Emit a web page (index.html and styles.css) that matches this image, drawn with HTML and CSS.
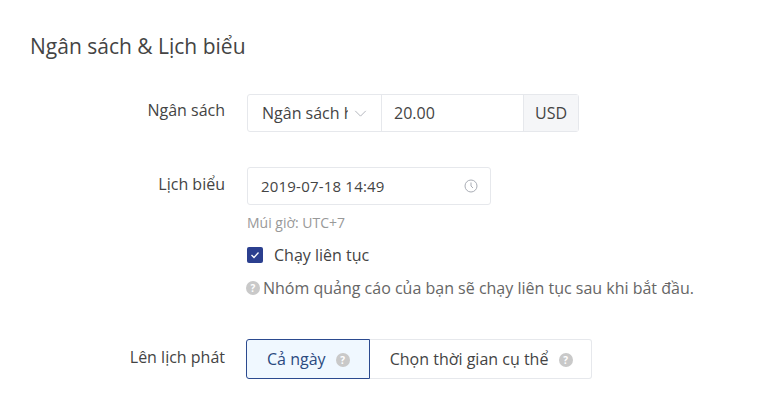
FILE: index.html
```html
<!DOCTYPE html>
<html>
<head>
  <title>Ngân sách & Lịch biểu</title>
  <link rel="stylesheet" href="styles.css">
</head>
<body>
  <h3>Ngân sách &amp; Lịch biểu</h3>

  <div class="row row-budget">
    <div class="label">Ngân sách</div>
    <div class="control">
      <div class="budget-group">
        <div class="budget-select">
          <span class="select-text">Ngân sách hàng ngày</span>
          <svg class="chevron" viewBox="0 0 14 8"><path d="M1 1l6 6 6-6"/></svg>
        </div>
        <div class="budget-input">20.00</div>
        <div class="budget-unit">USD</div>
      </div>
    </div>
  </div>

  <div class="row row-schedule">
    <div class="label">Lịch biểu</div>
    <div class="control">
      <div class="date-input">
        <span>2019-07-18 14:49</span>
        <svg class="clock" viewBox="0 0 14 14"><circle cx="7" cy="7" r="6"/><path d="M7 3.5V7l2 2"/></svg>
      </div>
      <div class="timezone">Múi giờ: UTC+7</div>
      <div class="check-row">
        <span class="checkbox"><svg viewBox="0 0 16 16"><path d="M4.5 8l2.5 2.5 4.5-5"/></svg></span>
        <span>Chạy liên tục</span>
      </div>
      <div class="tip"><span class="help help-small">?</span>Nhóm quảng cáo của bạn sẽ chạy liên tục sau khi bắt đầu.</div>
    </div>
  </div>

  <div class="row row-delivery">
    <div class="label">Lên lịch phát</div>
    <div class="control">
      <div class="segments">
        <div class="segment active">Cả ngày <span class="help">?</span></div>
        <div class="segment">Chọn thời gian cụ thể <span class="help">?</span></div>
      </div>
    </div>
  </div>
</body>
</html>
```

FILE: styles.css
```css
body {
  margin: 0;
  padding: 32px 0 0 30px;
  background: #fff;
  color: #333;
  font-family: "Open Sans", "Noto Sans", sans-serif;
  font-size: 16px;
}

h3 {
  margin: 0 0 34px 0;
  font-size: 21px;
  line-height: 28px;
  font-weight: 400;
  color: #444;
}

.row {
  display: flex;
}

.row-schedule {
  margin-top: 35px;
}

.row-delivery {
  margin-top: 41px;
}

.label {
  width: 195px;
  margin-right: 22px;
  text-align: right;
  line-height: 33px;
  color: #444;
}

.row-schedule .label {
  line-height: 35px;
}

.row-delivery .label {
  line-height: 36px;
}

.budget-group {
  display: flex;
  width: 332px;
  height: 38px;
  box-sizing: border-box;
  border: 1px solid #e6e8ec;
  border-radius: 3px;
  line-height: 36px;
  color: #444;
}

.budget-select {
  display: flex;
  align-items: center;
  width: 134px;
  box-sizing: border-box;
  padding: 0 12px 0 14px;
  border-right: 1px solid #e6e8ec;
}

.select-text {
  width: 86px;
  overflow: hidden;
  white-space: nowrap;
}

.chevron {
  width: 13px;
  height: 7px;
  margin-left: 6px;
  fill: none;
  stroke: #a9adb5;
}

.budget-input {
  width: 141px;
  box-sizing: border-box;
  padding-left: 12px;
}

.budget-unit {
  flex: 1;
  text-align: center;
  background: #f5f6f8;
  border-left: 1px solid #e6e8ec;
}

.date-input {
  display: flex;
  align-items: center;
  justify-content: space-between;
  width: 244px;
  height: 38px;
  box-sizing: border-box;
  padding: 0 12px 0 13px;
  border: 1px solid #e6e8ec;
  border-radius: 3px;
  font-size: 15px;
  letter-spacing: 0.2px;
  color: #444;
}

.clock {
  width: 14px;
  height: 14px;
  fill: none;
  stroke: #a9adb5;
}

.timezone {
  margin-top: 8px;
  font-size: 14px;
  line-height: 20px;
  color: #999;
}

.check-row {
  display: flex;
  align-items: center;
  gap: 11px;
  margin-top: 12px;
  line-height: 20px;
  color: #444;
}

.checkbox {
  width: 16px;
  height: 16px;
  border-radius: 2px;
  background: #2b3f8f;
}

.checkbox svg {
  display: block;
  fill: none;
  stroke: #fff;
  stroke-width: 1.3;
}

.tip {
  display: flex;
  align-items: center;
  gap: 3px;
  margin-top: 13px;
  margin-left: -1px;
  line-height: 20px;
  color: #666;
}

.help {
  display: inline-block;
  width: 14px;
  height: 14px;
  margin-left: 6px;
  border-radius: 50%;
  background: #c9c9c9;
  color: #fff;
  font-size: 10px;
  font-weight: 700;
  line-height: 14px;
  text-align: center;
  vertical-align: 1px;
}

.help-small {
  margin-left: 0;
}

.segments {
  display: flex;
  height: 40px;
  margin-left: -1px;
}

.segment {
  box-sizing: border-box;
  padding: 0 18px 0 20px;
  line-height: 38px;
  border: 1px solid #e6e8ec;
  border-left: 0;
  border-radius: 0 3px 3px 0;
  color: #444;
}

.segment.active {
  padding-right: 19px;
  border: 1px solid #2b4a8f;
  border-radius: 3px 0 0 3px;
  background: #f0f8ff;
  color: #2b4a7f;
}
```
